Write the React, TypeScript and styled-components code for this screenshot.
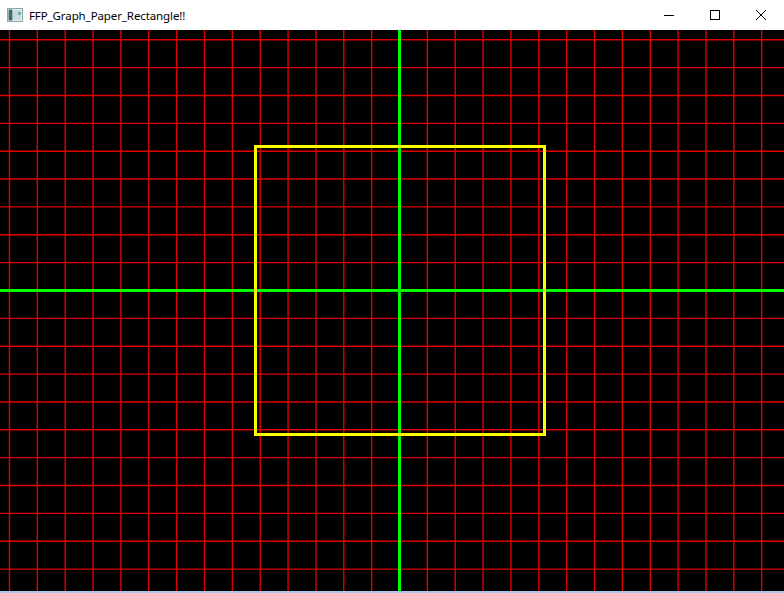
import React from "react";
import styled, { createGlobalStyle } from "styled-components";

const Global = createGlobalStyle`
  html, body { margin: 0; padding: 0; background: #fff; }
  body { width: 784px; height: 593px; overflow: hidden; }
`;

const Window = styled.div`
  width: 784px;
  height: 593px;
  display: flex;
  flex-direction: column;
  background: #000;
`;

const TitleBar = styled.div`
  height: 30px;
  flex: none;
  display: flex;
  align-items: center;
  background: #fff;
  font-family: "Noto Sans", "Open Sans", sans-serif;
  font-size: 11.5px;
  color: #000;
`;

const AppIcon = styled.div`
  width: 16px;
  height: 14px;
  margin: 0 6px 0 7px;
  display: flex;
  align-items: center;
`;

const Title = styled.span`
  flex: 1;
  letter-spacing: -0.1px;
`;

const Controls = styled.div`
  display: flex;
  height: 30px;
`;

const CtrlButton = styled.div`
  width: 46px;
  height: 30px;
  display: flex;
  align-items: center;
  justify-content: center;
`;

const Canvas = styled.div`
  flex: none;
  height: 561px;
  background: #000;
  overflow: hidden;
`;

const BottomEdge = styled.div`
  flex: none;
  height: 2px;
  background: #a9c8e8;
`;

const STEP = 27.86;
const CX = 399.5;
const CY = 260.5;

function GraphPaper() {
  const vx: number[] = [];
  for (let k = -14; k <= 14; k++) {
    const x = CX + k * STEP;
    if (x > 0 && x < 784) vx.push(x);
  }
  const hy: number[] = [];
  for (let k = -10; k <= 11; k++) {
    const y = CY + k * STEP;
    if (y > 0 && y < 561) hy.push(y);
  }
  return (
    <svg width={784} height={561} viewBox="0 0 784 561">
      {vx.map((x) => (
        <line key={"v" + x} x1={x} y1={0} x2={x} y2={561} stroke="#e00000" strokeWidth={1.4} />
      ))}
      {hy.map((y) => (
        <line key={"h" + y} x1={0} y1={y} x2={784} y2={y} stroke="#e00000" strokeWidth={1.4} />
      ))}
      <line x1={CX} y1={0} x2={CX} y2={561} stroke="#00ff00" strokeWidth={3} />
      <line x1={0} y1={CY} x2={784} y2={CY} stroke="#00ff00" strokeWidth={3} />
      <rect x={255.5} y={116.5} width={289} height={288} fill="none" stroke="#ffff00" strokeWidth={3} />
    </svg>
  );
}

export default function App() {
  return (
    <Window>
      <Global />
      <TitleBar>
        <AppIcon>
          <svg width="16" height="14" viewBox="0 0 16 14">
            <rect x="0.5" y="0.5" width="15" height="13" fill="#fff" stroke="#8aa" />
            <rect x="1.5" y="1.5" width="4" height="11" fill="#3d6f6a" />
            <rect x="6" y="1.5" width="8.5" height="11" fill="#c9dcdc" />
            <rect x="11" y="4" width="3" height="3" fill="#7aa" />
          </svg>
        </AppIcon>
        <Title>FFP_Graph_Paper_Rectangle!!</Title>
        <Controls>
          <CtrlButton>
            <svg width="10" height="10" viewBox="0 0 10 10">
              <line x1="0" y1="5.5" x2="10" y2="5.5" stroke="#000" strokeWidth="1" />
            </svg>
          </CtrlButton>
          <CtrlButton>
            <svg width="10" height="10" viewBox="0 0 10 10">
              <rect x="0.5" y="0.5" width="9" height="9" fill="none" stroke="#000" strokeWidth="1" />
            </svg>
          </CtrlButton>
          <CtrlButton>
            <svg width="10" height="10" viewBox="0 0 10 10">
              <path d="M0 0 L10 10 M10 0 L0 10" stroke="#000" strokeWidth="1" />
            </svg>
          </CtrlButton>
        </Controls>
      </TitleBar>
      <Canvas>
        <GraphPaper />
      </Canvas>
      <BottomEdge />
    </Window>
  );
}
